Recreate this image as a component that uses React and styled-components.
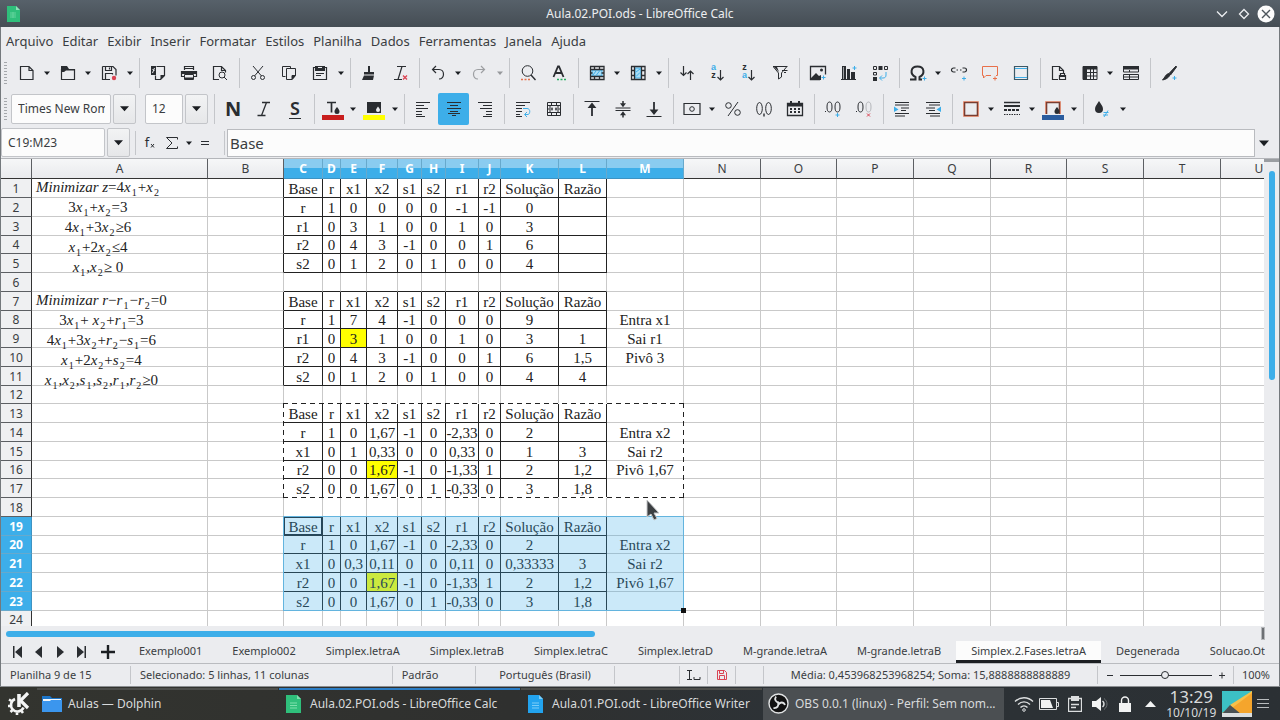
import React, {useState} from 'react';
import styled, {createGlobalStyle, css} from 'styled-components';


const DARK = '#2a2d31';
const BLUE = '#3daee9';
const RED = '#da4453';
const ORANGE = '#e8704a';

const GlobalStyle = createGlobalStyle`
    * {
        box-sizing: border-box;
    }
    body {
        margin: 0;
        font-family: "Noto Sans", "Open Sans", sans-serif;
        font-size: 12px;
        color: #3a3d41;
    }
    button, input {
        font-family: inherit;
        color: inherit;
    }
`

const Desktop = styled.div`
    display: flex;
    flex-direction: column;
    height: 100vh;
    overflow: hidden;
`

const Window = styled.main`
    display: flex;
    flex-direction: column;
    flex: 1;
    min-height: 0;
    background-color: #ebecef;
    border-left: 1px solid #74797d;
    border-right: 1px solid #74797d;
`

const TitleBar = styled.header`
    display: grid;
    grid-template-columns: 84px 1fr 84px;
    align-items: center;
    height: 27px;
    margin: 0 -1px;
    background: linear-gradient(#57616a, #454d54);
    color: #eceef0;
`

const Title = styled.h1`
    margin: 0;
    font-size: 12px;
    font-weight: 400;
    text-align: center;
`

const AppIcon = styled.span`
    display: flex;
    padding-left: 6px;
`

const WindowButtons = styled.div`
    display: flex;
    justify-content: flex-end;
    align-items: center;
    gap: 4px;
    padding-right: 5px;
`

const PlainButton = styled.button`
    display: flex;
    align-items: center;
    justify-content: center;
    flex-shrink: 0;
    padding: 0;
    border: none;
    background: none;
`

const MenuBar = styled.nav`
    display: flex;
    align-items: center;
    gap: 9px;
    height: 28px;
    padding-left: 5px;
`

const MenuItem = styled.button`
    padding: 0;
    border: none;
    background: none;
    font-size: 13px;
    line-height: 18px;
    white-space: nowrap;
`

const Toolbar = styled.div`
    display: flex;
    align-items: center;
    height: ${props => props.$tall ? '37px' : '35px'};
    padding-left: 3px;
`

const Grip = styled.span`
    width: 3px;
    height: 22px;
    margin-right: 4px;
    background: repeating-linear-gradient(#a4a7ab 0 1px, transparent 1px 3px);
`

const Group = styled.div`
    display: flex;
    align-items: center;
    & + & {
        border-left: 1px solid #c4c6ca;
        margin-left: 4px;
        padding-left: 2px;
    }
    height: 30px;
`

const ToolButton = styled(PlainButton)`
    width: 31px;
    height: 32px;
    border-radius: 2px;
    background-color: ${props => props.$active ? BLUE : 'transparent'};
    opacity: ${props => props.$disabled ? 0.4 : 1};
`

const ArrowButton = styled(PlainButton)`
    width: 10px;
    height: 30px;
    opacity: ${props => props.$disabled ? 0.4 : 1};
    &:last-child {
        width: 11px;
    }
`

const Combo = styled.div`
    display: flex;
    gap: 2px;
    margin-right: ${props => props.$gap};
`

const ComboInput = styled.input`
    width: ${props => props.$width};
    height: ${props => props.$height || '30px'};
    padding: 0 5px 0 6px;
    border: 1px solid #c3c5c9;
    border-radius: 2px;
    background-color: #fcfcfc;
    font-size: 12px;
    outline: none;
`

const ComboArrow = styled(PlainButton)`
    width: 23px;
    border: 1px solid #c3c5c9;
    border-radius: 2px;
    background: linear-gradient(#f2f3f4, #e6e7e9);
`

const FormulaBar = styled.div`
    display: flex;
    align-items: center;
    height: 32px;
    padding-right: 7px;
    border-bottom: 1px solid #b4b6ba;
`

const FormulaTools = styled.div`
    display: flex;
    align-items: center;
    height: 24px;
    padding: 0 8px 0 3px;
    border-left: 1px solid #c4c6ca;
    border-right: 1px solid #c4c6ca;
    margin: 0 2px 0 5px;
`

const FormulaTool = styled(PlainButton)`
    width: ${props => props.$width || '22px'};
    height: 24px;
`

const FormulaInput = styled.input`
    flex: 1;
    min-width: 0;
    height: 28px;
    padding: 0 2px;
    border: 1px solid #b9bbbf;
    background-color: #fcfcfc;
    font-size: 15px;
    outline: none;
`

const SheetArea = styled.div`
    display: flex;
    flex: 1;
    min-height: 0;
`

const SheetPane = styled.div`
    flex: 1;
    min-width: 0;
    overflow: hidden;
    background-color: #fff;
`

const VerticalScroll = styled.div`
    width: 15px;
    display: flex;
    flex-direction: column;
    align-items: center;
    border-top: 3px solid #9a9da1;
`

const VerticalThumb = styled.div`
    width: 6px;
    height: 45%;
    margin-top: 9px;
    border-radius: 3px;
    background-color: ${BLUE};
`

const HorizontalScroll = styled.div`
    display: flex;
    justify-content: space-between;
    align-items: center;
    height: 15px;
    padding-left: 5px;
`

const HorizontalThumb = styled.div`
    width: 46.3%;
    height: 6px;
    border-radius: 3px;
    background-color: ${BLUE};
`

const ScrollSplit = styled.span`
    width: 4px;
    height: 13px;
    margin-right: 14px;
    background-color: #6d7074;
    border: 1px solid #b5b7ba;
`

const SheetTable = styled.table`
    table-layout: fixed;
    width: 100%;
    border-collapse: separate;
    border-spacing: 0;
`

const headSelected = css`
    color: #fff;
    font-weight: 700;
    background: ${BLUE};
`

const ColumnHead = styled.th`
    height: 20px;
    padding: 1px 0 0;
    border-right: 1px solid ${props => props.$selected ? '#67a9cc' : '#5c5f63'};
    border-bottom: 1px solid ${props => props.$selected ? '#3d93c3' : '#333'};
    background: linear-gradient(#f6f7f8, #e9eaed);
    font-size: 12px;
    line-height: 18px;
    font-weight: 400;
    ${props => props.$selected && headSelected}
    ${props => props.$selected && css`
        background: linear-gradient(#8accf0 0 45%, #3daee9 45%);
    `}
`

const RowHead = styled.th`
    height: ${props => props.$height}px;
    padding: 1px 0 0;
    border-right: 1px solid ${props => props.$selected ? '#3d93c3' : '#333'};
    border-bottom: 1px solid ${props => props.$selected ? '#67a9cc' : '#5c5f63'};
    background-color: #eff0f2;
    font-size: 12px;
    line-height: 16px;
    font-weight: 400;
    ${props => props.$selected && headSelected}
`

const Cell = styled.td`
    position: relative;
    padding: 1px 0 0;
    border-right: 1px solid ${props => props.$darkRight ? '#222' : '#c9c9c9'};
    border-bottom: 1px solid ${props => props.$darkBottom ? '#222' : '#c9c9c9'};
    background-color: ${props => props.$marked ? '#ffff00' : '#fff'};
    font-family: "Liberation Serif", "Times New Roman", serif;
    font-size: 15px;
    line-height: 16px;
    text-align: center;
    white-space: nowrap;
    color: #222;
    ${props => props.$selected && css`
        &::after {
            content: "";
            position: absolute;
            inset: 0 -1px -1px 0;
            background-color: rgba(61, 174, 233, 0.27);
        }
    `}
`

const CopyFrame = styled.div`
    position: absolute;
    top: -1px;
    left: -1px;
    z-index: 1;
    background:
        repeating-linear-gradient(90deg, #222 0 5px, #fff 5px 9px) top / 100% 1px no-repeat,
        repeating-linear-gradient(90deg, #222 0 5px, #fff 5px 9px) bottom / 100% 1px no-repeat,
        repeating-linear-gradient(#222 0 5px, #fff 5px 9px) left / 1px 100% no-repeat,
        repeating-linear-gradient(#222 0 5px, #fff 5px 9px) right / 1px 100% no-repeat;
`

const SelectionFrame = styled.div`
    position: absolute;
    top: -1px;
    left: -1px;
    z-index: 1;
    border: 1px solid #63b4de;
    &::after {
        content: "";
        position: absolute;
        right: -3px;
        bottom: -3px;
        width: 5px;
        height: 5px;
        background-color: #111;
    }
`

const ActiveCell = styled.div`
    position: absolute;
    inset: 0;
    z-index: 2;
    border: 1px solid #24475c;
`

const Pointer = styled.svg`
    position: absolute;
    left: 39px;
    top: 1px;
    z-index: 3;
`

const Formulas = styled.div`
    position: absolute;
    left: 4px;
    top: -2px;
    z-index: 1;
    font-size: 15px;
    line-height: 20px;
    sub {
        margin: 0 1px;
        font-size: 10px;
        line-height: 0;
        vertical-align: -4px;
    }
`

const TabBar = styled.div`
    display: flex;
    align-items: stretch;
    height: 23px;
    border-bottom: 1px solid #b9bbbf;
    padding-right: 14px;
`

const TabNav = styled.div`
    display: flex;
    align-items: center;
    padding-left: 6px;
`

const TabNavButton = styled(PlainButton)`
    width: ${props => props.$wide ? '33px' : '21px'};
    height: 20px;
`

const TabList = styled.div`
    display: flex;
    flex: 1;
    min-width: 0;
    overflow: hidden;
`

const SheetTab = styled.button`
    flex-shrink: 0;
    padding: 0 15px;
    border: none;
    border-bottom: 3px solid ${props => props.$active ? '#1b1e22' : 'transparent'};
    background-color: ${props => props.$active ? '#fcfcfc' : 'transparent'};
    font-size: 11px;
    line-height: 18px;
`

const StatusBar = styled.footer`
    display: flex;
    align-items: center;
    height: 22px;
    padding-right: 9px;
    font-size: 11px;
    line-height: 16px;
    white-space: nowrap;
`

const StatusField = styled.div`
    display: flex;
    align-items: center;
    justify-content: ${props => props.$start ? 'flex-start' : 'center'};
    width: ${props => props.$width};
    flex-grow: ${props => props.$grow ? 1 : 0};
    height: 18px;
    padding-left: ${props => props.$start ? '9px' : '0'};
    border-right: 1px solid #c4c6ca;
`

const Zoom = styled.div`
    display: flex;
    align-items: center;
    gap: 6px;
    height: 18px;
    padding: 0 7px 0 8px;
    border-right: 1px solid #c4c6ca;
    margin-right: 8px;
`

const ZoomSlider = styled.input`
    appearance: none;
    width: 92px;
    height: 8px;
    margin: 0;
    background: linear-gradient(${DARK}, ${DARK}) center / 100% 1px no-repeat;
    &::-webkit-slider-thumb {
        appearance: none;
        width: 8px;
        height: 8px;
        border: 1px solid ${DARK};
        border-radius: 50%;
        background-color: #ebecef;
    }
`

const TaskBar = styled.div`
    display: flex;
    align-items: stretch;
    height: 34px;
    border-top: 1px solid #8b8e91;
    background: linear-gradient(90deg, #33342f, #2f302f 40%, #2d3236 60%, #2b3034);
    color: #d8dadb;
`

const Launcher = styled(PlainButton)`
    width: 37px;
`

const Task = styled.button`
    display: flex;
    align-items: center;
    gap: ${props => props.$gap || '9px'};
    width: 241px;
    margin: 1px 1px 0 0;
    padding: 0 0 3px ${props => props.$pad || '7px'};
    border: none;
    border-top: 2px solid ${props => props.$line};
    background-color: ${props => props.$filled ? '#4b4f52' : 'transparent'};
    color: inherit;
    font-size: 12px;
    white-space: nowrap;
`

const Tray = styled.div`
    display: flex;
    align-items: center;
    justify-content: space-between;
    flex: 1;
    padding: 0 11px 0 9px;
`

const TrayButton = styled(PlainButton)`
    width: 20px;
`

const Clock = styled.div`
    display: flex;
    flex-direction: column;
    align-items: center;
    font-size: 12px;
    line-height: 15px;
`

const Time = styled.span`
    font-size: 17px;
    line-height: 17px;
`

const Triangle = ({size = 7, color = '#1b1e22'}) => (
    <svg width={size} height={size} viewBox="0 0 8 8"><path d="M0 2h8L4 6.500z" fill={color} /></svg>
)

const Letters = ({size = 15, x = 8, y = 13, color = DARK, children, ...rest}) => (
    <text x={x} y={y} fontSize={size} fill={color} stroke="none" textAnchor="middle" {...rest}>{children}</text>
)

const SortLetter = (props) => <Letters size="9" x="3.500" fontFamily="Liberation Sans, sans-serif" fontWeight="700" {...props} />

const Plus = ({x, y, color = BLUE}) => <path d={`M${x} ${y - 2}v4M${x - 2} ${y}h4`} stroke={color} />

const drop = <path d="M12 6c1.500 2 2.500 3 2.500 4.500a2.500 2.500 0 0 1-5 0C9.500 9 10.500 8 12 6z" fill={DARK} stroke="none" />

// 16x16 toolbar drawings
const icons = {
    novo: <path d="M1.500 1.500h8.500l4 4v9h-12.500zM10 1.500v4h4" strokeWidth="1.200" />,
    abrir: <><path d="M1.500 4.500h13v10h-13z" strokeWidth="1.200" /><path d="M1 1h6l2 3h6v1.500H6L4 7H1z" fill={DARK} stroke="none" /></>,
    salvar: <><path d="M1.500 1.500h10.500l3 3v6M9 14.500H1.500v-13M4.500 1.500v4h6v-4M8.500 2.500v2M4.500 14.500v-6h7v1" strokeWidth="1.200" /><circle cx="13" cy="13" r="2.200" fill={RED} stroke="none" /></>,
    pdf: <><path d="M6.500 1.500h8v9l-4 4h-5v-4" strokeWidth="1.200" /><path d="M1 1h5v9H1z" fill={DARK} stroke="none" /><path d="M15 10v.5L10.500 15v-5z" fill={DARK} stroke="none" /><path d="M2.500 8l2-5M2.500 4l2 2" stroke="#ebecef" /></>,
    imprimir: <><path d="M3.500 5V1.500h9V5M3.500 3.500h9M3 11.500H.5v-5h15v5H13" strokeWidth="1.200" /><path d="M1 6h14v3H1z" fill={DARK} stroke="none" /><path d="M3.500 9.500h9v5h-9z" fill="#ebecef" /><path d="M4 12.500h8v2H4z" fill={DARK} stroke="none" /></>,
    visualizar: <><path d="M7 14.500H1.500v-13h8l4 4v2M9.500 1.500v4h4" strokeWidth="1.200" /><circle cx="10" cy="10" r="3" /><path d="M12 12l3 3" /></>,
    cortar: <><path d="M3 1l8.500 10M13 1L4.500 11" /><circle cx="3.500" cy="12.500" r="2" /><circle cx="12.500" cy="12.500" r="2" /></>,
    copiar: <><path d="M4.500 11.500h-3v-10h8v2" /><path d="M5.500 3.500h9v7l-3.500 4H5.500z" /><path d="M14.500 10.500H11v4z" fill={DARK} /></>,
    colar: <><path d="M1.500 2.500h13v12h-13zM4 8.500h8M4 10.500h5" strokeWidth="1.200" /><path d="M3 1h10v5H3z" fill={DARK} stroke="none" /><path d="M6 2.500h4" stroke="#ebecef" /></>,
    pincel: <><path d="M7 1h2v6H7zM3 7h10v2.500H3zM3 10.500h10L12 15H1z" fill={DARK} stroke="none" /></>,
    limpar: <><path d="M5 1.500h9M10 1.500l-4 13M2 14.500h8" strokeWidth="1.200" /><path d="M11 10.500l4 4M15 10.500l-4 4" stroke={RED} strokeWidth="1.300" /></>,
    desfazer: <path d="M2.500 4.500h6.500c6 0 6 9.500 0 9.500M6 1L2.500 4.500 6 8" strokeWidth="1.200" />,
    refazer: <path d="M13.500 4.500H7c-6 0-6 9.500 0 9.500M10 1l3.500 3.500L10 8" strokeWidth="1.200" />,
    localizar: <><circle cx="7.500" cy="6" r="5.300" /><path d="M11 10l4.500 5" strokeWidth="1.400" /><path d="M1 14.500h9" stroke={ORANGE} strokeWidth="1.500" strokeDasharray="2 1.500" /></>,
    ortografia: <><path d="M2.500 12L7 1.500h1L12.500 12M4.500 8h6" strokeWidth="1.800" /><path d="M6 14.500h9" stroke="#27ae60" strokeWidth="1.500" strokeDasharray="2 1.500" /></>,
    linha: <><path d="M3 5h10v6H3z" fill="#a9dcf5" stroke={BLUE} /><path d="M1 1.500h14v13H1.500v-13M1 4.500h14M1 11.500h14M5.500 1v3M10.500 1v3M5.500 12v3M10.500 12v3M1.500 8h2M12.500 8h2" strokeWidth="1.300" /><path d="M4 10l3-4M7.500 10l3-4" stroke={BLUE} /></>,
    coluna: <><path d="M5 3h6v10H5z" fill="#a9dcf5" stroke={BLUE} /><path d="M1 1.500h14v13H1.500v-13M4.500 1v14M11.500 1v14M1 5.500h3M1 10.500h3M12 5.500h3M12 10.500h3" strokeWidth="1.300" /><path d="M6 7l4-3M6 11.500l4-4" stroke={BLUE} /></>,
    ordenar: <path d="M4.500 1v9M1.500 7.500l3 3 3-3M11.500 15V6M8.500 9l3-3 3 3" strokeWidth="1.200" />,
    crescente: <><SortLetter y="5" color={BLUE}>a</SortLetter><SortLetter y="13">z</SortLetter><path d="M10.500 5v9.500M7.500 12l3 3 3-3" strokeWidth="1.200" /></>,
    decrescente: <><SortLetter y="5">z</SortLetter><SortLetter y="13" color={BLUE}>a</SortLetter><path d="M10.500 5v9.500M7.500 12l3 3 3-3" strokeWidth="1.200" /></>,
    filtro: <><path d="M1 1.500h14.500M1.500 2l5 6v6l3-2V8l5-6M10 5.500h5.500M12 7.500h2" /><path d="M2 2h3l2 5z" fill={DARK} stroke="none" /></>,
    imagem: <><path d="M10 14.500H.5v-13h15v8" strokeWidth="1.300" /><path d="M1 13l5-5 3 3 2-1v5H1z" fill={DARK} stroke="none" /><circle cx="11.500" cy="5" r="1.500" fill={DARK} stroke="none" /><Plus x="13.500" y="12.500" /></>,
    grafico: <><path d="M1 1h4v14H1zM6 4h3v11H6zM10 7h4v8h-4z" fill={DARK} stroke="none" /><path d="M2.500 2v12" stroke="#9fa2a5" /><path d="M0 14.500h15" /><Plus x="13.500" y="3" /></>,
    dinamica: <><path d="M1.500 1.500h3v3h-3zM12.500 1.500h3v3h-3z" /><path d="M6.500 1h4v4h-4zM1 12h4v4H1z" fill={DARK} stroke="none" /><path d="M1.500 7.500h3v2.500h-3z" /><path d="M14 7v3c0 2-1 3-3 3H8M10 10.500L7.500 13l2.500 2.500" stroke={BLUE} /></>,
    simbolo: <><path d="M0 14.500h5.500v-2.500C-.5 9 .5 1.500 7.500 1.500S15.500 9 9.500 12v2.500h2.500" strokeWidth="2" /><Plus x="14.500" y="13.500" /></>,
    link: <><path d="M4.500 3h-2a1.800 1.800 0 0 0 0 4h2M11.500 3h2a1.800 1.800 0 0 1 0 4h-2M5.500 5h1.500M9 5h1.500M0 5h1M15 5h1" strokeWidth="1.200" /><Plus x="13" y="13.500" /></>,
    comentario: <><path d="M9 10.500H4L1.500 13v-2.500h-1v-9h15v9H14" stroke={ORANGE} /><Plus x="13" y="13.500" color={ORANGE} /></>,
    cabecalho: <><path d="M1.500 1.500h13v13h-13z" strokeWidth="1.200" stroke="#3b5866" /><path d="M2 3.500h12M2 12.500h12" stroke={BLUE} /></>,
    area: <><path d="M7 14.500H1.500v-13h7l4 4V8M8.500 1.500v4h4" strokeWidth="1.200" /><path d="M8 10h7v2H8z" fill={DARK} stroke="none" /><path d="M9.500 10V8.500h4V10M8.500 10.500h6v4h-6z" strokeWidth="1.200" /></>,
    congelar: <><path d="M1 1.500h14v13H1z" /><path d="M1 1h14v3.500H1zM1 1h4v14H1z" fill={DARK} stroke="none" /><path d="M8.500 4v11M11.500 4v11M5 7.500h10M5 11h10" /></>,
    dividir: <><path d="M.5 2h15v5H.5zM.5 9.500h15v5H.5zM6.500 5v2M6.500 9.500v5M.5 12h15" /><path d="M0 1h16v3.500H0z" fill={DARK} stroke="none" /></>,
    desenho: <><path d="M15 1L8 8.500l1.500 1.500L15.500 2z" fill={DARK} /><path d="M7.500 8.500c-3 1-3.500 4-6 6.500 3-.5 6-2 7.500-5z" fill={DARK} stroke={DARK} /><Plus x="13.500" y="13" /></>,
    negrito: <Letters size="20" y="15" fontWeight="700">N</Letters>,
    italico: <path d="M6 1.500h8M10.500 1.500l-5 13M1.500 14.500h8" strokeWidth="1.300" />,
    sublinhado: <><Letters size="18" y="14" fontWeight="600">S</Letters><path d="M2 17.500h12" /></>,
    esquerda: <path d="M1 1.500h14M1 4.500h8M1 7.500h12M1 10.500h6M1 13.500h6M1 15.500h9" />,
    centro: <path d="M1 1.500h14M4 4.500h8M1 7.500h14M4 10.500h8M2 12.500h12M6 14.500h4" />,
    direita: <path d="M1 1.500h14M6 4.500h9M3 7.500h12M9 10.500h6M9 13.500h6M6 15.500h9" />,
    quebrar: <><path d="M1 1.500h14M1 4.500h9M1 7.500h6M1 10.500h6M1 13.500h4M1 15.500h6" /><path d="M8 7.500h4c4 0 3 6 1 6h-3M12 11l-2.500 2.500L12 16" stroke={BLUE} /></>,
    mesclar: <><path d="M1.500 1.500h13v13h-13zM1.500 4.500h13M1.500 11.500h13M5.500 1.500v3M10.500 1.500v3M5.500 11.500v3M10.500 11.500v3M4 4.500v7M12 4.500v7M1.500 8h2M12.500 8h2" /><path d="M5 8h2M9 8h2M6 6.500v3M10 6.500v3" /></>,
    topo: <><path d="M.5 .5h15" /><path d="M8 15V4M5.500 6L8 3l2.500 3z" strokeWidth="1.800" /></>,
    meio: <><path d="M.5 7h15M.5 9.500h15" /><path d="M8 0v4M8 16.500v-4M6.500 3L8 5l1.500-2zM6.500 13.500l1.500-2 1.500 2z" strokeWidth="1.500" /></>,
    base: <><path d="M.5 15.500h15" /><path d="M8 1v10M5.500 9.500L8 12.500l2.500-3z" strokeWidth="1.800" /></>,
    moeda: <><path d="M0 2.500h16v11H0z" strokeWidth="1.200" /><circle cx="8" cy="8" r="2.300" /></>,
    porcento: <><circle cx="3.500" cy="4.500" r="2.800" /><circle cx="12.500" cy="11.500" r="2.800" /><path d="M13 1L3 15" /></>,
    numero: <><ellipse cx="3.500" cy="7.500" rx="2.800" ry="6" /><ellipse cx="12.500" cy="7.500" rx="2.800" ry="6" /><path d="M8 12.500v3" strokeWidth="1.400" /></>,
    data: <><path d="M.5 2.500h15v12H.5z" strokeWidth="1.300" /><path d="M0 2h16v3.500H0zM3 0h2v3H3zM11 0h2v3h-2z" fill={DARK} stroke="none" /><path d="M3 8h10M3 11h10" strokeWidth="2" strokeDasharray="2 2" /></>,
    maisCasa: <><ellipse cx="4.500" cy="6" rx="2.500" ry="5" /><ellipse cx="12.500" cy="6" rx="2.500" ry="5" /><path d="M0 10.500h1" /><Plus x="12.500" y="14" /></>,
    menosCasa: <><ellipse cx="4.500" cy="6" rx="2.500" ry="5" /><ellipse cx="12.500" cy="6" rx="2.500" ry="5" stroke="#b4b6ba" /><path d="M0 10.500h1" /><path d="M11 12.500l3 3M14 12.500l-3 3" stroke={RED} /></>,
    aumentar: <><path d="M1 1.500h14M1 4h14M7 7h8M7 9.500h5M1 12.500h14M1 15h10" /><path d="M0 5.500L4.500 8.500 0 11z" fill={BLUE} stroke="none" /></>,
    diminuir: <><path d="M1 1.500h14M4 4h11M1 7h9M4 9.500h6M1 12.500h14M5 15h10" /><path d="M16 5.500L11.500 8.500 16 11z" fill={BLUE} stroke="none" /></>,
    borda: <><path d="M1.500 1.500h13v13h-13z" stroke="#793d31" strokeWidth="1.600" /><path d="M.5 .5h15v15H.5z" stroke={ORANGE} strokeWidth=".6" /></>,
    estiloBorda: <><path d="M0 1.500h16" strokeWidth="1.500" /><path d="M0 5h16" strokeWidth="2" /><path d="M0 9h16" strokeWidth="2" strokeDasharray="3 1" /><path d="M0 13.500h16" strokeDasharray="1.500 1" /></>,
    condicional: <><path d="M5 0c2 3.500 4 5 4 8a4 4 0 0 1-8 0c0-3 2-4.500 4-8z" fill={DARK} stroke="none" /><path d="M9.500 11.500h5M9 14h5M14 9.500L10 16" stroke={BLUE} /></>,
    corTexto: <><path d="M2 1.500h9M6.500 1.500v10" strokeWidth="1.700" />{drop}<path d="M-3 14h22v5H-3z" fill="#c81e1e" stroke="none" /></>,
    corRealce: <><path d="M1 1h14v11H1z" fill={DARK} stroke="none" /><path d="M12 5.500c1 1.500 2 2.500 2 3.500a2 2 0 0 1-4 0c0-1 1-2 2-3.500z" fill="#ebecef" stroke="none" /><path d="M-3 14h22v5H-3z" fill="#ffff00" stroke="none" /></>,
    corBorda: <><path d="M1.500 13V1.500h13V13" stroke="#793d31" strokeWidth="1.600" /><path d="M.5 13V.5h15V13" stroke={ORANGE} strokeWidth=".6" />{drop}<path d="M-3 14h22v5H-3z" fill="#2a5c9e" stroke="none" /></>,
}

const Icon = ({name}) => (
    <svg width="16" height="16" viewBox="0 0 16 16" fill="none" stroke={DARK} overflow="visible">{icons[name]}</svg>
)

// a trailing "+" gives the button a drop-down arrow
const standardTools = [
    ['novo+', 'abrir+', 'salvar+'],
    ['pdf', 'imprimir', 'visualizar'],
    ['cortar', 'copiar', 'colar+'],
    ['pincel', 'limpar'],
    ['desfazer+', 'refazer+'],
    ['localizar', 'ortografia'],
    ['linha+', 'coluna+'],
    ['ordenar', 'crescente', 'decrescente', 'filtro'],
    ['imagem', 'grafico', 'dinamica'],
    ['simbolo+', 'link', 'comentario', 'cabecalho'],
    ['area', 'congelar+', 'dividir'],
    ['desenho'],
]

const formatTools = [
    ['negrito', 'italico', 'sublinhado'],
    ['corTexto+', 'corRealce+'],
    ['esquerda', 'centro', 'direita'],
    ['quebrar', 'mesclar'],
    ['topo', 'meio', 'base'],
    ['moeda+', 'porcento', 'numero', 'data'],
    ['maisCasa', 'menosCasa'],
    ['aumentar', 'diminuir'],
    ['borda+', 'estiloBorda+', 'corBorda+'],
    ['condicional+'],
]

const ToolGroup = ({tools}) => (
    <Group>
        {tools.map((tool) => {
            const name = tool.replace('+', '');
            return (
                <React.Fragment key={name}>
                    <ToolButton aria-label={name} $active={name === 'centro'} $disabled={name === 'refazer'}>
                        <Icon name={name} />
                    </ToolButton>
                    {tool.endsWith('+') &&
                        <ArrowButton aria-label={name + ' opções'} $disabled={name === 'refazer'}><Triangle size={6} /></ArrowButton>
                    }
                </React.Fragment>
            )
        })}
    </Group>
)

const columns = [
    ['A', 176], ['B', 76], ['C', 39], ['D', 18], ['E', 26], ['F', 31], ['G', 24], ['H', 24], ['I', 33], ['J', 22],
    ['K', 58], ['L', 48], ['M', 77], ['N', 77], ['O', 76], ['P', 77], ['Q', 77], ['R', 76], ['S', 77], ['T', 77], ['U', 77],
]

const FIRST = 2;
const LAST = 12;
const heading = ['Base', 'r', 'x1', 'x2', 's1', 's2', 'r1', 'r2', 'Solução', 'Razão'];

const blocks = [
    {start: 1, rows: [
        heading,
        ['r', '1', '0', '0', '0', '0', '-1', '-1', '0'],
        ['r1', '0', '3', '1', '0', '0', '1', '0', '3'],
        ['r2', '0', '4', '3', '-1', '0', '0', '1', '6'],
        ['s2', '0', '1', '2', '0', '1', '0', '0', '4'],
    ]},
    {start: 7, mark: 'E9', rows: [
        heading,
        ['r', '1', '7', '4', '-1', '0', '0', '0', '9', '', 'Entra x1'],
        ['r1', '0', '3', '1', '0', '0', '1', '0', '3', '1', 'Sai r1'],
        ['r2', '0', '4', '3', '-1', '0', '0', '1', '6', '1,5', 'Pivô 3'],
        ['s2', '0', '1', '2', '0', '1', '0', '0', '4', '4'],
    ]},
    {start: 13, mark: 'F16', rows: [
        heading,
        ['r', '1', '0', '1,67', '-1', '0', '-2,33', '0', '2', '', 'Entra x2'],
        ['x1', '0', '1', '0,33', '0', '0', '0,33', '0', '1', '3', 'Sai r2'],
        ['r2', '0', '0', '1,67', '-1', '0', '-1,33', '1', '2', '1,2', 'Pivô 1,67'],
        ['s2', '0', '0', '1,67', '0', '1', '-0,33', '0', '3', '1,8'],
    ]},
    {start: 19, mark: 'F22', rows: [
        heading,
        ['r', '1', '0', '1,67', '-1', '0', '-2,33', '0', '2', '', 'Entra x2'],
        ['x1', '0', '0,3', '0,11', '0', '0', '0,11', '0', '0,33333', '3', 'Sai r2'],
        ['r2', '0', '0', '1,67', '-1', '0', '-1,33', '1', '2', '1,2', 'Pivô 1,67'],
        ['s2', '0', '0', '1,67', '0', '1', '-0,33', '0', '3', '1,8'],
    ]},
]

const formulas = {
    A1: ['Minimizar z=4x_1+x_2', '3x_1+x_2=3', '4x_1+3x_2≥6', 'x_1+2x_2≤4', 'x_1,x_2≥ 0'],
    A7: ['Minimizar r−r_1−r_2=0', '3x_1+ x_2+r_1=3', '4x_1+3x_2+r_2−s_1=6', 'x_1+2x_2+s_2=4', 'x_1,x_2,s_1,s_2,r_1,r_2≥0'],
}

const rowHeight = (row) => row % 4 === 0 ? 18 : 19;

const blockAt = (row) => blocks.find((block) => row >= block.start && row < block.start + 5);

const rangeSize = (start) => {
    const width = columns.slice(FIRST, LAST + 1).reduce((sum, column) => sum + column[1], 0);
    let height = 0;
    for (let row = start; row < start + 5; row++) {
        height += rowHeight(row);
    }
    return {width: width + 1, height: height + 1};
}

const Formula = ({text}) => (
    <div>
        {text.split(/(_\d|[A-Za-z]+)/).map((part, i) => {
            if (part.startsWith('_')) return <sub key={i}>{part.slice(1)}</sub>
            if (/^[A-Za-z]/.test(part)) return <i key={i}>{part}</i>
            return part
        })}
    </div>
)

const SheetCell = ({row, col}) => {
    const name = columns[col][0] + row;
    const block = blockAt(row);
    const below = blockAt(row + 1);
    const inTable = col >= FIRST && col < LAST;
    return (
        <Cell
            $darkRight={block && col >= FIRST - 1 && col < LAST}
            $darkBottom={inTable && (block || below)}
            $marked={block && block.mark === name}
            $selected={row >= 19 && row <= 23 && col >= FIRST && col <= LAST}
        >
            {block && col >= FIRST && block.rows[row - block.start][col - FIRST]}
            {formulas[name] &&
                <Formulas>{formulas[name].map((text) => <Formula key={text} text={text} />)}</Formulas>
            }
            {name === 'C13' && <CopyFrame style={rangeSize(13)} />}
            {name === 'C19' && <SelectionFrame style={rangeSize(19)} />}
            {name === 'C19' && <ActiveCell />}
            {name === 'M18' &&
                <Pointer width="14" height="22" viewBox="0 0 14 22">
                    <path d="M1 1v17l4-3 3 6 3-1.500-3-5.500h5z" fill="#3c3f42" stroke="#c4c6c8" />
                </Pointer>
            }
        </Cell>
    )
}

const Sheet = () => (
    <SheetTable>
        <colgroup>
            <col style={{width: 31}} />
            {columns.map(([letter, width]) => <col key={letter} style={{width}} />)}
        </colgroup>
        <thead>
            <tr>
                <ColumnHead />
                {columns.map(([letter], col) =>
                    <ColumnHead key={letter} $selected={col >= FIRST && col <= LAST}>{letter}</ColumnHead>
                )}
            </tr>
        </thead>
        <tbody>
            {Array.from({length: 24}, (_, i) => i + 1).map((row) => (
                <tr key={row}>
                    <RowHead $height={rowHeight(row)} $selected={row >= 19 && row <= 23}>{row}</RowHead>
                    {columns.map(([letter], col) => <SheetCell key={letter} row={row} col={col} />)}
                </tr>
            ))}
        </tbody>
    </SheetTable>
)

const FileIcon = ({color, fold}) => (
    <svg width="15" height="18" viewBox="0 0 15 18">
        <path d="M0 0h11l4 4v14H0z" fill={color} />
        <path d="M11 0l4 4h-4z" fill={fold} />
        <path d="M4 8h7M4 10.500h7M4 13h7" stroke={fold} />
    </svg>
)

const menus = ['Arquivo', 'Editar', 'Exibir', 'Inserir', 'Formatar', 'Estilos', 'Planilha', 'Dados', 'Ferramentas', 'Janela', 'Ajuda'];

const sheets = [
    'Exemplo001', 'Exemplo002', 'Simplex.letraA', 'Simplex.letraB', 'Simplex.letraC', 'Simplex.letraD',
    'M-grande.letraA', 'M-grande.letraB', 'Simplex.2.Fases.letraA', 'Degenerada', 'Solucao.Otima',
]

const App = () => {
    const [sheet, setSheet] = useState('Simplex.2.Fases.letraA');
    const [zoom, setZoom] = useState(49);

    return (
        <Desktop>
            <GlobalStyle />
            <Window>
                <TitleBar>
                    <AppIcon>
                        <svg width="14" height="16" viewBox="0 0 14 16">
                            <path d="M1 0h9l4 4v12H1z" fill="#2fbf7b" />
                            <path d="M10 0l4 4h-4z" fill="#8fe0b9" />
                            <path d="M4 7h6M4 9h6M4 11h6M7 6v6" stroke="#63d39c" />
                        </svg>
                    </AppIcon>
                    <Title>Aula.02.POI.ods - LibreOffice Calc</Title>
                    <WindowButtons>
                        <PlainButton aria-label="Minimizar">
                            <svg width="18" height="18" viewBox="0 0 18 18" fill="none" stroke="#eceef0"><path d="M4 6.500l5 5 5-5" strokeWidth="1.300" /></svg>
                        </PlainButton>
                        <PlainButton aria-label="Maximizar">
                            <svg width="18" height="18" viewBox="0 0 18 18" fill="none" stroke="#eceef0"><path d="M9 4.500L13.500 9 9 13.500 4.500 9z" strokeWidth="1.300" /></svg>
                        </PlainButton>
                        <PlainButton aria-label="Fechar">
                            <svg width="18" height="18" viewBox="0 0 18 18"><circle cx="9" cy="9" r="8.500" fill="#fcfcfc" /><path d="M5 5l8 8M13 5l-8 8" stroke="#4d555c" strokeWidth="1.400" /></svg>
                        </PlainButton>
                    </WindowButtons>
                </TitleBar>
                <MenuBar>
                    {menus.map((menu) => <MenuItem key={menu}>{menu}</MenuItem>)}
                </MenuBar>
                <Toolbar>
                    <Grip />
                    {standardTools.map((tools) => <ToolGroup key={tools[0]} tools={tools} />)}
                </Toolbar>
                <Toolbar $tall>
                    <Grip />
                    <Combo $gap="9px">
                        <ComboInput aria-label="Nome da fonte" defaultValue="Times New Roman" $width="100px" />
                        <ComboArrow aria-label="Escolher fonte"><Triangle size={9} /></ComboArrow>
                    </Combo>
                    <Combo $gap="2px">
                        <ComboInput aria-label="Tamanho da fonte" defaultValue="12" $width="38px" />
                        <ComboArrow aria-label="Escolher tamanho"><Triangle size={9} /></ComboArrow>
                    </Combo>
                    <Group />
                    {formatTools.map((tools) => <ToolGroup key={tools[0]} tools={tools} />)}
                </Toolbar>
                <FormulaBar>
                    <Combo $gap="0">
                        <ComboInput aria-label="Caixa de nome" defaultValue="C19:M23" $width="104px" $height="29px" />
                        <ComboArrow aria-label="Escolher nome"><Triangle size={9} /></ComboArrow>
                    </Combo>
                    <FormulaTools>
                        <FormulaTool aria-label="Assistente de funções">
                            <svg width="14" height="16" viewBox="0 0 14 16" overflow="visible"><Letters size="13" x="4" y="12">f</Letters><path d="M8 9l3 3.500M11 9l-3 3.500" stroke={DARK} /></svg>
                        </FormulaTool>
                        <FormulaTool aria-label="Soma">
                            <svg width="14" height="14" viewBox="0 0 14 14" fill="none" stroke={DARK}><path d="M12.500 3.500v-2h-11L7 7l-5.500 5.500h11v-2" /></svg>
                        </FormulaTool>
                        <FormulaTool aria-label="Soma opções" $width="11px"><Triangle size={6} /></FormulaTool>
                        <FormulaTool aria-label="Fórmula">
                            <svg width="10" height="8" viewBox="0 0 10 8" stroke={DARK}><path d="M1 2.500h8M1 5.500h8" /></svg>
                        </FormulaTool>
                    </FormulaTools>
                    <FormulaInput aria-label="Linha de entrada" defaultValue="Base" />
                    <FormulaTool aria-label="Expandir" $width="17px"><Triangle size={10} /></FormulaTool>
                </FormulaBar>
                <SheetArea>
                    <SheetPane><Sheet /></SheetPane>
                    <VerticalScroll><VerticalThumb /></VerticalScroll>
                </SheetArea>
                <HorizontalScroll>
                    <HorizontalThumb />
                    <ScrollSplit />
                </HorizontalScroll>
                <TabBar>
                    <TabNav>
                        <TabNavButton aria-label="Primeira planilha">
                            <svg width="10" height="12" viewBox="0 0 10 12"><path d="M0 0h1.500v12H0zM9 0v12L2 6z" fill={DARK} /></svg>
                        </TabNavButton>
                        <TabNavButton aria-label="Planilha anterior">
                            <svg width="8" height="12" viewBox="0 0 8 12"><path d="M7 0v12L0 6z" fill={DARK} /></svg>
                        </TabNavButton>
                        <TabNavButton aria-label="Próxima planilha">
                            <svg width="8" height="12" viewBox="0 0 8 12"><path d="M1 0v12l7-6z" fill={DARK} /></svg>
                        </TabNavButton>
                        <TabNavButton aria-label="Última planilha">
                            <svg width="10" height="12" viewBox="0 0 10 12"><path d="M8.500 0H10v12H8.500zM1 0v12l7-6z" fill={DARK} /></svg>
                        </TabNavButton>
                        <TabNavButton aria-label="Adicionar planilha" $wide>
                            <svg width="14" height="14" viewBox="0 0 14 14"><path d="M7 0v14M0 7h14" stroke="#1b1e22" strokeWidth="2.400" /></svg>
                        </TabNavButton>
                    </TabNav>
                    <TabList>
                        {sheets.map((name) =>
                            <SheetTab key={name} $active={name === sheet} onClick={() => setSheet(name)}>{name}</SheetTab>
                        )}
                    </TabList>
                </TabBar>
                <StatusBar>
                    <StatusField $width="130px" $start>Planilha 9 de 15</StatusField>
                    <StatusField $width="262px" $start>Selecionado: 5 linhas, 11 colunas</StatusField>
                    <StatusField $width="83px" $start>Padrão</StatusField>
                    <StatusField $width="140px">Português (Brasil)</StatusField>
                    <StatusField $width="65px" />
                    <StatusField $width="28px">
                        <svg width="16" height="12" viewBox="0 0 16 12" fill="none" stroke={DARK}><path d="M1 1.500h5M3.500 1.500v9M1 10.500h5M8 8v2.500h6V8" /></svg>
                    </StatusField>
                    <StatusField $width="28px">
                        <svg width="10" height="10" viewBox="0 0 10 10" fill="none" stroke={RED}><path d="M.5.5h7l2 2v7h-9zM2.500.5v3h4v-3M2.500 9.500v-4h5v4" /></svg>
                    </StatusField>
                    <StatusField $width="28px" />
                    <StatusField $width="334px" $grow>Média: 0,453968253968254; Soma: 15,8888888888889</StatusField>
                    <Zoom>
                        <svg width="8" height="8" viewBox="0 0 8 8" stroke={DARK}><path d="M1 4.500h6" /></svg>
                        <ZoomSlider type="range" aria-label="Zoom" value={zoom} onChange={(e) => setZoom(e.target.value)} />
                        <svg width="8" height="8" viewBox="0 0 8 8" stroke={DARK}><path d="M1 4.500h6M4 1.500v6" /></svg>
                    </Zoom>
                    100%
                </StatusBar>
            </Window>
            <TaskBar>
                <Launcher aria-label="Menu de aplicativos">
                    <svg width="24" height="24" viewBox="0 0 24 24" fill="none" stroke="#f4f5f5">
                        <path d="M8 7a6.500 6.500 0 1 0 8.500 8.500" strokeWidth="2.600" />
                        <path d="M4.500 9L2 7.500M3.500 14H1M5.500 18l-2 2M10 20.500V23M14.500 19l1.500 2" strokeWidth="2.600" />
                        <path d="M12 2v13" strokeWidth="3.600" />
                        <path d="M21 1l-7.500 7.500L21 16" strokeWidth="3.200" />
                    </svg>
                </Launcher>
                <Task $line="#4c4d4a" $gap="6px" $pad="5px">
                    <svg width="20" height="18" viewBox="0 0 20 18">
                        <path d="M0 1h8l2 2h10v6H0z" fill="#1d75c8" />
                        <path d="M1 4h18v4H1z" fill="#f2f6fa" />
                        <path d="M0 6h8l1-1h11v12H0z" fill="#3b96ee" />
                    </svg>
                    Aulas — Dolphin
                </Task>
                <Task $line="#2a7cc4">
                    <FileIcon color="#2fbf7b" fold="#7fe0ad" />
                    Aula.02.POI.ods - LibreOffice Calc
                </Task>
                <Task $line="#4c4d4a">
                    <FileIcon color="#22a3ee" fold="#7ccdf8" />
                    Aula.01.POI.odt - LibreOffice Writer
                </Task>
                <Task $line="#4b4f52" $pad="5px" $gap="6px" $filled>
                    <svg width="21" height="21" viewBox="0 0 21 21">
                        <circle cx="10.500" cy="10.500" r="9.500" fill="#111" stroke="#e0e2e3" strokeWidth="1.400" />
                        <g fill="none" stroke="#e0e2e3" strokeWidth="1.800">
                            <path d="M8 3.500c-2 3 0 6 3 6" />
                            <path d="M17 12c-1.500-3.500-5-3-6.500-.5" />
                            <path d="M5.500 15c4 .5 5.500-2.500 4.500-5" />
                        </g>
                    </svg>
                    OBS 0.0.1 (linux) - Perfil: Sem nom...
                </Task>
                <Tray>
                    <TrayButton aria-label="Rede">
                        <svg width="20" height="16" viewBox="0 0 20 16" fill="none" stroke="#dcdedf"><path d="M1 5.500c5-5 13-5 18 0M4 8.500c3.500-3.500 8.500-3.500 12 0M6.500 11.500c2-2 5-2 7 0" strokeWidth="1.400" /><circle cx="10" cy="14" r="1.300" /></svg>
                    </TrayButton>
                    <TrayButton aria-label="Bateria">
                        <svg width="20" height="12" viewBox="0 0 20 12" fill="none" stroke="#dcdedf"><path d="M.5.5h17v11H.5zM18 4.500h1.500v4H18" /><path d="M2 2h9l3 8H2z" fill="#f2f3f3" stroke="none" /></svg>
                    </TrayButton>
                    <TrayButton aria-label="Área de transferência">
                        <svg width="14" height="16" viewBox="0 0 14 16" fill="none" stroke="#dcdedf"><path d="M.5 2.500h13v13H.5zM3 8.500h8M3 11.500h5" strokeWidth="1.300" /><path d="M3 0h8v5H3z" fill="#dcdedf" stroke="none" /></svg>
                    </TrayButton>
                    <TrayButton aria-label="Volume">
                        <svg width="16" height="16" viewBox="0 0 16 16" fill="none" stroke="#dcdedf"><path d="M0 5h4l5-4v14l-5-4H0z" fill="#f2f3f3" stroke="none" /><path d="M10.500 5c2 1.500 2 4.500 0 6" strokeWidth="1.500" /><path d="M12 2.500c4 3 4 8 0 11" stroke="#6e7274" /></svg>
                    </TrayButton>
                    <TrayButton aria-label="Bloquear">
                        <svg width="12" height="16" viewBox="0 0 12 16" fill="none" stroke="#f2f3f3"><path d="M0 7h12v9H0z" fill="#f2f3f3" stroke="none" /><path d="M2.500 7V4.500a3.500 3.500 0 0 1 7 0V7" strokeWidth="1.400" /></svg>
                    </TrayButton>
                    <TrayButton aria-label="Mostrar ocultos">
                        <svg width="11" height="6" viewBox="0 0 11 6"><path d="M0 6l5.500-6L11 6z" fill="#f2f3f3" /></svg>
                    </TrayButton>
                    <Clock>
                        <Time>13:29</Time>
                        10/10/19
                    </Clock>
                    <PlainButton aria-label="Mostrar área de trabalho">
                        <svg width="30" height="26" viewBox="0 0 30 26">
                            <path d="M0 0h30v26H0z" fill="#f5a52c" />
                            <path d="M0 0h30L10 16 0 22z" fill="#3cc0c4" />
                            <path d="M30 0v2L10 17 8 14z" fill="#f7c04a" />
                            <path d="M8 14l11 9H0z" fill="#4a5154" />
                            <path d="M0 22h30v4H0z" fill="#dcdfe0" />
                        </svg>
                    </PlainButton>
                    <PlainButton aria-label="Opções do painel">
                        <svg width="12" height="12" viewBox="0 0 12 12" stroke="#b9bcbe"><path d="M0 1.500h12M0 5.500h12M0 9.500h12" /></svg>
                    </PlainButton>
                </Tray>
            </TaskBar>
        </Desktop>
    )
}

export default App
